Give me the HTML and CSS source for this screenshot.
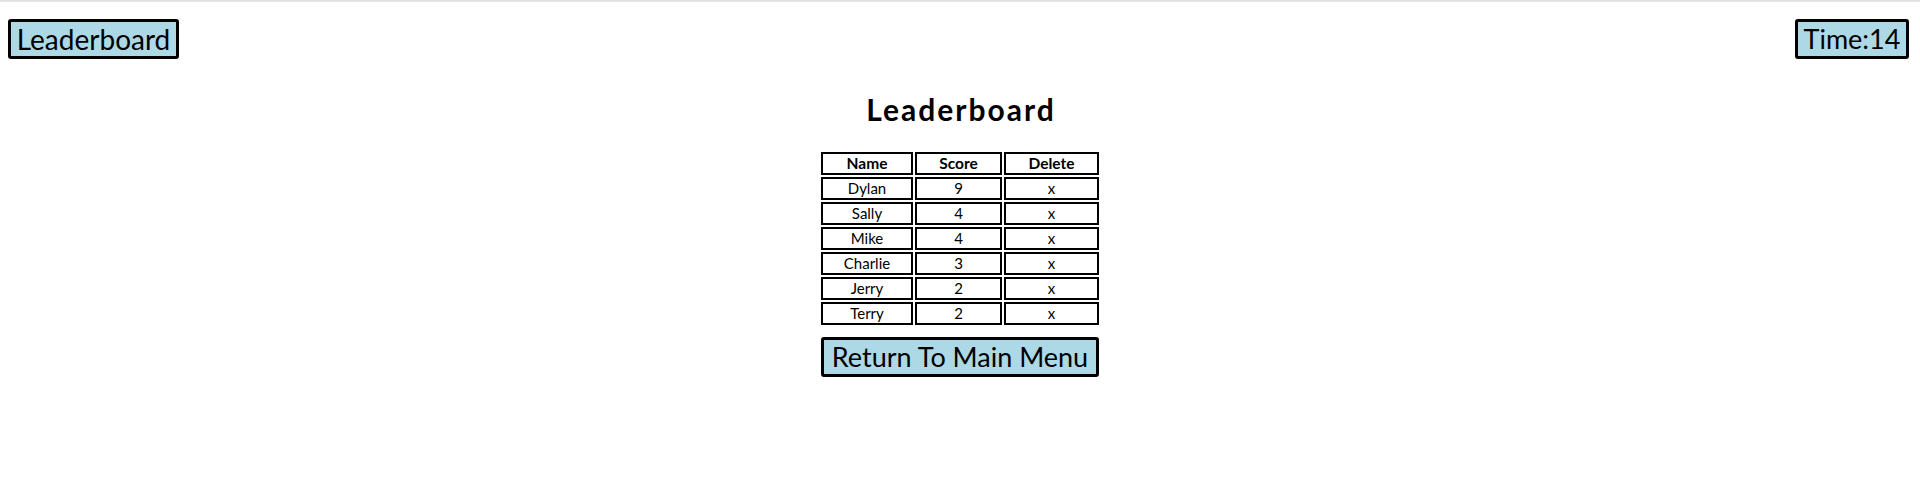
FILE: index.html
```html
<!DOCTYPE html>
<html>
<head>
<meta charset="utf-8">
<link rel="stylesheet" href="styles.css">
</head>
<body>
<header class="topbar">
  <button class="btn btn-board">Leaderboard</button>
  <button class="btn btn-time">Time:14</button>
</header>
<main class="board">
  <h1 class="title">Leaderboard</h1>
  <div class="wrap">
    <table class="scores">
      <thead>
        <tr><th class="c-name">Name</th><th class="c-score">Score</th><th class="c-del">Delete</th></tr>
      </thead>
      <tbody>
        <tr><td>Dylan</td><td>9</td><td>x</td></tr>
        <tr><td>Sally</td><td>4</td><td>x</td></tr>
        <tr><td>Mike</td><td>4</td><td>x</td></tr>
        <tr><td>Charlie</td><td>3</td><td>x</td></tr>
        <tr><td>Jerry</td><td>2</td><td>x</td></tr>
        <tr><td>Terry</td><td>2</td><td>x</td></tr>
      </tbody>
    </table>
    <button class="btn btn-return">Return To Main Menu</button>
  </div>
</main>
</body>
</html>
```
FILE: styles.css
```css
html, body {
  margin: 0;
  padding: 0;
  background: #ffffff;
}
body {
  border-top: 2px solid #e2e2e2;
  font-family: "Lato", "Open Sans", sans-serif;
  color: #000;
}
.topbar {
  display: flex;
  justify-content: space-between;
  align-items: flex-start;
  padding: 17px 11px 0 8px;
}
.btn {
  box-sizing: border-box;
  height: 40px;
  background: #add8e6;
  border: 3px solid #000;
  border-radius: 3px;
  font-family: "Lato", "Open Sans", sans-serif;
  font-size: 27px;
  line-height: 32px;
  color: #000;
  padding: 0;
  text-align: center;
  white-space: nowrap;
}
.btn-board { width: 171px; font-size: 28px; }
.btn-time { width: 114px; }
.board {
  display: flex;
  flex-direction: column;
  align-items: center;
  padding-top: 32px;
}
.title {
  margin: 0;
  padding-left: 2px;
  font-size: 30px;
  line-height: 36px;
  font-weight: 700;
  letter-spacing: 2px;
}
.wrap {
  width: 278px;
  margin-top: 23px;
  display: flex;
  flex-direction: column;
}
.scores {
  border-collapse: separate;
  border-spacing: 2px;
  margin: 0 -2px;
  width: 282px;
  table-layout: fixed;
}
.scores th, .scores td {
  box-sizing: border-box;
  border: 2px solid #000;
  height: 23px;
  padding: 0;
  font-size: 15px;
  line-height: 19px;
  text-align: center;
}
.scores th { font-weight: 700; font-size: 15.5px; }
.c-name { width: 92px; }
.c-score { width: 87px; }
.c-del { width: 95px; }
.btn-return {
  width: 278px;
  margin-top: 10px;
}
```
